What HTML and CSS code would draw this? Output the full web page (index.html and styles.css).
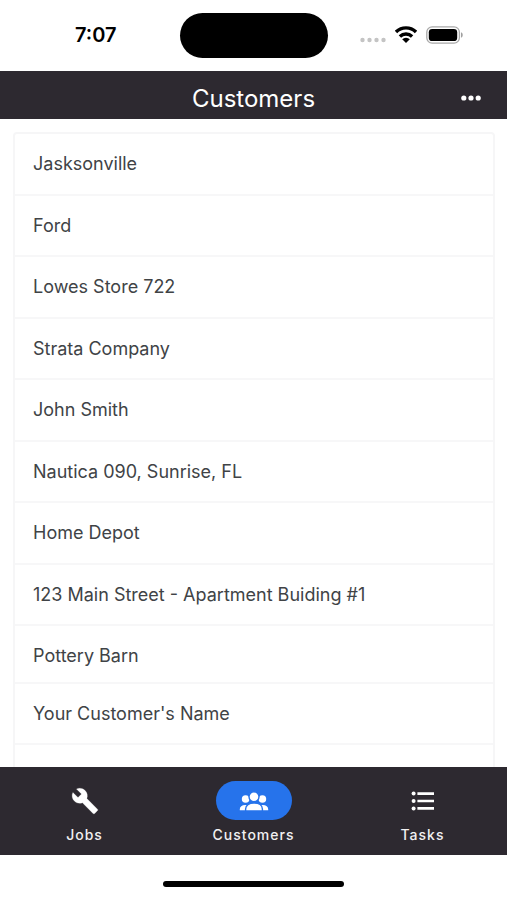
FILE: index.html
```html
<!DOCTYPE html>
<html lang="en">
<head>
<meta charset="utf-8">
<meta name="viewport" content="width=device-width, initial-scale=1">
<title>Customers</title>
<link rel="stylesheet" href="styles.css">
</head>
<body>
<div class="app">
  <div class="status-bar">
    <time class="clock">7:07</time>
    <div class="island"></div>
    <div class="indicators">
      <svg class="signal" width="26" height="22" viewBox="0 0 26 22" aria-hidden="true" fill="#c4c4c4"><circle cx="2.5" cy="16" r="2.2"/><circle cx="9.5" cy="16" r="2.2"/><circle cx="16.5" cy="16" r="2.2"/><circle cx="23.5" cy="16" r="2.2"/></svg>
      <svg class="wifi" width="22" height="18" viewBox="0 0 22 18" aria-hidden="true" fill="none" stroke="#000" stroke-width="3.4"><path d="M1 6a14.3 14.3 0 0 1 20 0"/><path d="M4.9 10.4a8.8 8.8 0 0 1 12.2 0"/><path d="M11 17l-3.8-3.7a5.3 5.3 0 0 1 7.6 0z" fill="#000" stroke="none"/></svg>
      <svg class="battery" width="37" height="18" viewBox="0 0 37 18" aria-hidden="true"><rect x="0.8" y="0.8" width="32.6" height="16.4" rx="5.4" fill="#fff" stroke="#a8a8a8" stroke-width="1.3"/><rect x="2.8" y="2.9" width="28.4" height="12.2" rx="3.4"/><path d="M35 6.3c2.3.7 2.3 4.7 0 5.4z" fill="#a0a0a0"/></svg>
    </div>
  </div>
  <header class="top-bar">
    <h1 class="title">Customers</h1>
    <button class="more" type="button" aria-label="More options">
      <svg width="20" height="6" viewBox="0 0 20 6" aria-hidden="true" fill="#fff"><circle cx="2.8" cy="3" r="2.6"/><circle cx="10" cy="3" r="2.6"/><circle cx="17.2" cy="3" r="2.6"/></svg>
    </button>
  </header>
  <main class="content">
    <ul class="customers">
      <li><a href="#">Jasksonville</a></li>
      <li><a href="#">Ford</a></li>
      <li><a href="#">Lowes Store 722</a></li>
      <li><a href="#">Strata Company</a></li>
      <li><a href="#">John Smith</a></li>
      <li><a href="#">Nautica 090, Sunrise, FL</a></li>
      <li><a href="#">Home Depot</a></li>
      <li><a href="#">123 Main Street - Apartment Buiding #1</a></li>
      <li class="short"><a href="#">Pottery Barn</a></li>
      <li><a href="#">Your Customer's Name</a></li>
      <li></li>
    </ul>
  </main>
  <nav class="tabs">
    <a class="tab" href="#">
      <span class="pill"><svg width="28" height="28" viewBox="0 0 24 24" aria-hidden="true" fill="#fff" stroke="#fff" stroke-width=".2"><path d="M22.7 19l-9.1-9.1c.9-2.3.4-5-1.5-6.900-2-2-5-2.400-7.400-1.300L9 6 6 9 1.600 4.700C.4 7.100.9 10.100 2.900 12.100c1.900 1.900 4.600 2.400 6.900 1.500l9.100 9.100c.4.4 1 .4 1.400 0l2.300-2.300c.5-.4.5-1.100.1-1.400z"/></svg></span>
      <span class="label">Jobs</span>
    </a>
    <a class="tab active" href="#" aria-current="page">
      <span class="pill"><svg class="people" width="30" height="20" viewBox="0 0 30 20" aria-hidden="true"><circle cx="6.6" cy="8" r="3.8"/><circle cx="23.4" cy="8" r="3.8"/><path d="M.8 19.200v-1c0-2.600 2-4.300 5.600-4.300H9v5.300zM29.200 19.200v-1c0-2.600-2-4.300-5.600-4.300H21v5.300z"/><circle class="front" cx="15" cy="5.700" r="5"/><path class="front" d="M6.600 19.900v-1.900c0-3.700 3.400-6 8.400-6s8.400 2.300 8.400 6v1.900z"/></svg></span>
      <span class="label">Customers</span>
    </a>
    <a class="tab" href="#">
      <span class="pill"><svg width="24" height="20" viewBox="0 0 24 20" aria-hidden="true" fill="#fff"><circle cx="2.6" cy="2.6" r="2"/><circle cx="2.6" cy="10" r="2"/><circle cx="2.6" cy="17.4" r="2"/><path d="M6.4 1.300H23v2.600H6.400zM6.400 8.700H23v2.600H6.400zM6.400 16.100H23v2.600H6.400z"/></svg></span>
      <span class="label">Tasks</span>
    </a>
  </nav>
  <footer class="home-area"><div class="home-bar"></div></footer>
</div>
</body>
</html>
```
FILE: styles.css
```css
* {
  box-sizing: border-box;
}

body {
  margin: 0;
  background: #fff;
  font-family: Inter, "Liberation Sans", sans-serif;
}

a {
  color: inherit;
  text-decoration: none;
}

.app {
  display: flex;
  flex-direction: column;
  height: 100vh;
}

.status-bar {
  display: grid;
  grid-template-columns: 1fr 148px 1fr;
  align-items: center;
  flex: none;
  height: 71px;
}

.clock {
  padding: 0 63px 2px 0;
  text-align: right;
  font-size: 20px;
  font-weight: 600;
  color: #000;
}

.island {
  height: 45px;
  border-radius: 23px;
  background: #000;
}

.indicators {
  display: flex;
  align-items: center;
  gap: 9px;
  padding: 0 0 2px 32px;
}

.top-bar {
  display: grid;
  grid-template-columns: 1fr auto 1fr;
  align-items: center;
  flex: none;
  height: 48px;
  padding: 6px 14px 0;
  background: #2d2930;
  color: #fff;
}

.title {
  grid-column: 2;
  margin: 0;
  font-size: 24px;
  font-weight: 400;
}

.more {
  display: flex;
  justify-self: end;
  padding: 12px;
  border: 0;
  background: none;
}

.content {
  flex: 1;
  min-height: 0;
  overflow: hidden;
  padding: 13px 12px 0 13px;
}

.customers {
  margin: 0;
  padding: 0;
  border: 2px solid #f6f6f7;
  border-radius: 4px;
  list-style: none;
  font-size: 18px;
  line-height: 24px;
  color: #404346;
}

.customers li {
  height: 62px;
  padding: 18px 18px 0;
  border-bottom: 2px solid #f7f7f8;
}

.customers li:nth-child(even) {
  height: 61px;
}

.customers .short {
  height: 58px;
}

.tabs {
  display: grid;
  grid-template-columns: repeat(3, 1fr);
  flex: none;
  height: 88px;
  padding-top: 14px;
  background: #2d2930;
  color: #f1f0f2;
}

.tab {
  display: flex;
  flex-direction: column;
  align-items: center;
  gap: 5px;
}

.pill {
  display: flex;
  align-items: center;
  justify-content: center;
  width: 76px;
  height: 39px;
  border-radius: 20px;
}

.active .pill {
  background: #2673eb;
}

.people {
  fill: #fff;
}

.people .front {
  stroke: #2673eb;
  stroke-width: 1.4px;
}

.label {
  font-size: 14px;
  font-weight: 500;
  line-height: 20px;
  letter-spacing: 1px;
}

.home-area {
  display: flex;
  justify-content: center;
  flex: none;
  height: 45px;
  padding-top: 26px;
}

.home-bar {
  width: 181px;
  height: 6px;
  border-radius: 3px;
  background: #000;
}
```
